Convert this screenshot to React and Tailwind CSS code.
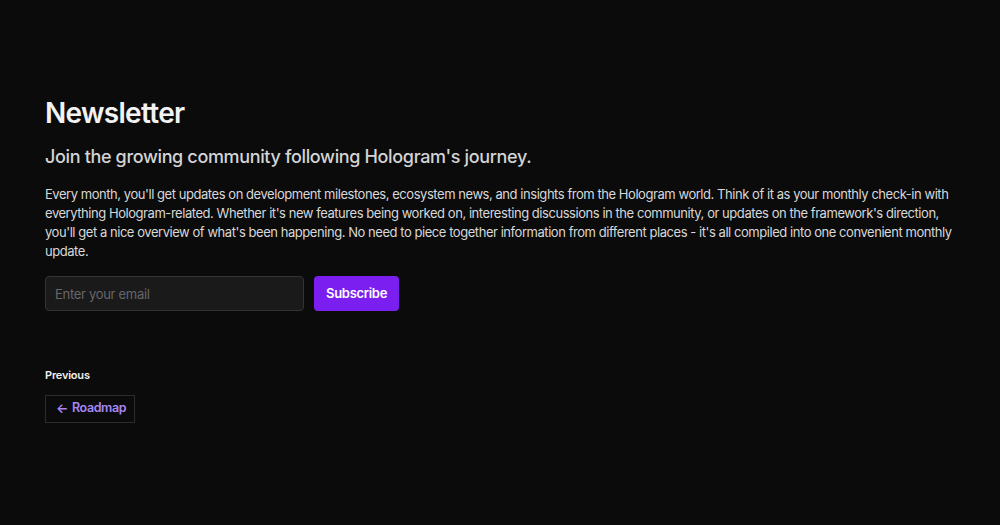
export default function App() {
  return (
    <div className="min-h-[525px] w-full bg-[#0b0b0c] text-[#ededed]" style={{ fontFamily: 'Inter, "Noto Sans", sans-serif' }}>
      <div className="px-[45px] pt-[96px]">
        <h1 className="text-[28px] font-semibold leading-[34px] text-[#f2f2f2] tracking-[-0.7px]">Newsletter</h1>
        <h2 className="mt-[13px] text-[18px] font-medium leading-[28px] text-[#d4d4d4] tracking-[-0.35px]">Join the growing community following Hologram's journey.</h2>
        <p className="mt-[14px] text-[13px] leading-[19px] text-[#d8d8d8] tracking-[-0.45px] max-w-[925px]">
          Every month, you'll get updates on development milestones, ecosystem news, and insights from the Hologram world. Think of it as your monthly check-in with everything Hologram-related. Whether it's new features being worked on, interesting discussions in the community, or updates on the framework's direction, you'll get a nice overview of what's been happening. No need to piece together information from different places - it's all compiled into one convenient monthly update.
        </p>
        <form className="mt-[15px] flex gap-[10px]" onSubmit={(e) => e.preventDefault()}>
          <input
            type="email"
            placeholder="Enter your email"
            className="h-[35px] w-[259px] rounded-[4px] border border-[#333336] bg-[#1a1a1b] px-[9px] text-[13px] tracking-[-0.3px] text-[#e5e5e5] placeholder:text-[#66666a] outline-none"
          />
          <button type="submit" className="h-[35px] rounded-[4px] bg-[#7b1ff0] px-[12px] text-[13px] font-semibold tracking-[-0.3px] text-white">Subscribe</button>
        </form>
        <div className="mt-[56px] text-[11px] font-semibold tracking-[-0.2px] text-[#f0f0f0]">Previous</div>
        <a href="#" className="mt-[11px] inline-flex h-[28px] items-center gap-[4px] border border-[#2b2b30] pl-[10px] pr-[8px] text-[12.5px] font-semibold tracking-[-0.4px] text-[#a687f5]">
          <span className="text-[13px] leading-none">←</span>
          <span>Roadmap</span>
        </a>
      </div>
    </div>
  );
}
